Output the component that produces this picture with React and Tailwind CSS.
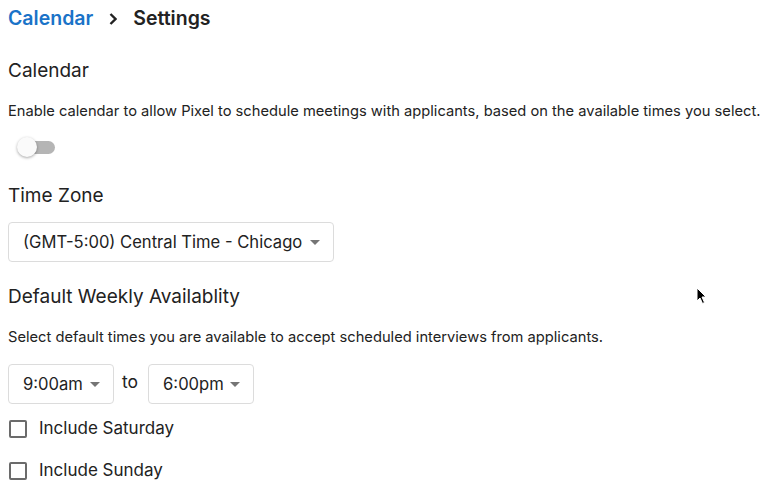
import React from 'react';

function Caret() {
  return (
    <svg width="10" height="5" viewBox="0 0 10 5" className="shrink-0">
      <path d="M0 0 L10 0 L5 5 Z" fill="#757575" />
    </svg>
  );
}

function Select({ label, width }) {
  return (
    <div className={`flex items-center justify-between h-10 border border-[#dcdcdc] rounded pl-[14px] pr-[13px] ${width}`}>
      <span className="text-[16.6px] text-[#222] whitespace-nowrap">{label}</span>
      <Caret />
    </div>
  );
}

function Checkbox({ label }) {
  return (
    <label className="flex items-center gap-3 h-[18px]">
      <span className="w-[18px] h-[18px] border-2 border-[#6b6b6b] rounded-[2px] ml-[1px]" />
      <span className="text-[17px] text-[#222]">{label}</span>
    </label>
  );
}

export default function App() {
  return (
    <div className="relative min-h-screen bg-white px-2 pt-[6px] text-[#222]" style={{ fontFamily: 'Inter, "Noto Sans", sans-serif' }}>
      <div className="flex items-center h-[26px] text-[19.5px] font-semibold">
        <span className="text-[#1a73c8]">Calendar</span>
        <svg width="8" height="14" viewBox="0 0 8 14" className="mx-[16px]">
          <path d="M1.5 2 L6.5 7 L1.5 12" stroke="#222" strokeWidth="2.4" fill="none" />
        </svg>
        <span>Settings</span>
      </div>

      <h2 className="mt-[25px] text-[19px] leading-[28px]">Calendar</h2>
      <p className="mt-[15px] text-[14.7px] leading-[22px] whitespace-nowrap">
        Enable calendar to allow Pixel to schedule meetings with applicants, based on the available times you select.
      </p>
      <div className="relative mt-[15px] ml-[9px] w-[38px] h-[20px] flex items-center">
        <div className="ml-[4px] w-[34px] h-[13px] rounded-full bg-[#b5b5b5]" />
        <div className="absolute left-0 top-0 w-[20px] h-[20px] rounded-full bg-[#fafafa] shadow-[0_1px_3px_rgba(0,0,0,0.35)]" />
      </div>

      <h2 className="mt-[25px] text-[19px] leading-[28px]">Time Zone</h2>
      <div className="mt-[12px]">
        <Select label="(GMT-5:00) Central Time - Chicago" width="w-[326px]" />
      </div>

      <h2 className="mt-[21px] text-[19px] leading-[28px]">Default Weekly Availablity</h2>
      <p className="mt-[15px] text-[14.7px] leading-[22px] whitespace-nowrap">
        Select default times you are available to accept scheduled interviews from applicants.
      </p>
      <div className="mt-[16px] flex items-center">
        <Select label="9:00am" width="w-[106px]" />
        <span className="ml-[8px] mr-[10px] text-[17.5px] -mt-[4px]">to</span>
        <Select label="6:00pm" width="w-[106px]" />
      </div>
      <div className="mt-[16px] flex flex-col gap-[24px]">
        <Checkbox label="Include Saturday" />
        <Checkbox label="Include Sunday" />
      </div>

      <svg className="absolute left-[696px] top-[287px]" width="12" height="18" viewBox="0 0 12 18">
        <path d="M1 1 L1 14 L4 11 L6.5 16.5 L8.5 15.5 L6 10 L10 10 Z" fill="#000" stroke="#fff" strokeWidth="1" />
      </svg>
    </div>
  );
}
